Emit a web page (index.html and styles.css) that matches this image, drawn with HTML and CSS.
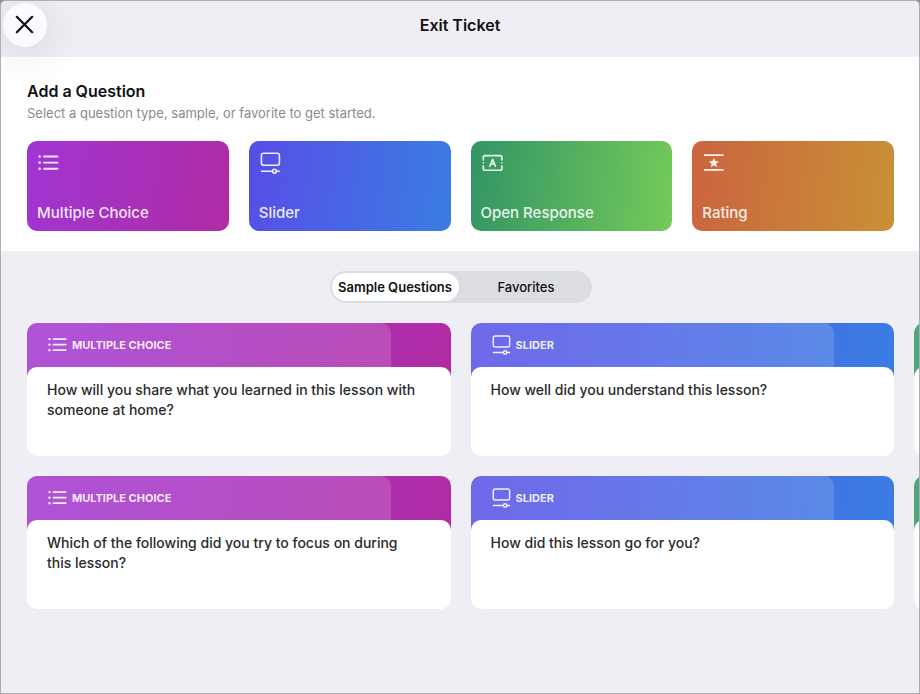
FILE: index.html
```
<!DOCTYPE html>
<html lang="en">
<head>
    <meta charset="UTF-8">
    <meta name="viewport" content="width=device-width, initial-scale=1.0">
    <title>Exit Ticket</title>
    <link rel="stylesheet" href="styles.css">
</head>
<body>
    <!-- Shared icons -->
    <svg class="icon-defs" aria-hidden="true">
        <symbol id="icon-list" viewBox="0 0 22 22">
            <g fill="none" stroke="currentColor" stroke-width="1.9" stroke-linecap="round">
                <path d="M6 4.5H19.5M6 10.6H19.5M6 16.7H19.5"/>
                <path stroke-width="2.6" d="M1.6 4.5h.01M1.6 10.6h.01M1.6 16.7h.01"/>
            </g>
        </symbol>
        <symbol id="icon-slider" viewBox="0 0 22 22">
            <g fill="none" stroke="currentColor" stroke-width="1.6" stroke-linecap="round">
                <rect x="1.4" y="1.2" width="18" height="12" rx="2.2"/>
                <path d="M1.6 19.2H12.4M16.6 19.2H19.4"/>
                <circle cx="14.5" cy="19.2" r="1.9"/>
            </g>
        </symbol>
        <symbol id="icon-text" viewBox="0 0 22 22">
            <g fill="none" stroke="currentColor" stroke-width="1.6" stroke-linecap="round" stroke-linejoin="round">
                <path d="M1.3 8V5.4Q1.3 3.6 3.1 3.6H18.1Q19.9 3.6 19.9 5.4V8M1.3 13.8V16.4Q1.3 18.2 3.1 18.2H18.1Q19.9 18.2 19.9 16.4V13.8"/>
                <path d="M1.3 10.9h.01M19.9 10.9h.01"/>
                <path d="M7.8 14.2 10.6 7.4 13.4 14.2M8.8 12H12.4"/>
            </g>
        </symbol>
        <symbol id="icon-star" viewBox="0 0 22 22">
            <path fill="none" stroke="currentColor" stroke-width="1.7" stroke-linecap="round" d="M1.6 3.2H20M1.6 17.8H20"/>
            <path fill="currentColor" d="M10.9 5.8 12.3 9.1 15.9 9.4 13.2 11.7 14 15.2 10.9 13.3 7.8 15.2 8.6 11.7 5.9 9.4 9.5 9.1Z"/>
        </symbol>
    </svg>

    <div class="sheet">
        <header class="header">
            <button class="close" type="button" aria-label="Close">
                <svg viewBox="0 0 20 20" width="20" height="20" aria-hidden="true">
                    <path d="M1.8 1.8 17.2 17.2M17.2 1.8 1.8 17.2" fill="none" stroke="currentColor" stroke-width="2.2" stroke-linecap="round"/>
                </svg>
            </button>
            <h1 class="title">Exit Ticket</h1>
        </header>

        <section class="add">
            <h2 class="add-title">Add a Question</h2>
            <p class="add-hint">Select a question type, sample, or favorite to get started.</p>
            <div class="types">
                <button class="type choice" type="button">
                    <svg class="type-icon"><use href="#icon-list"/></svg>
                    <span>Multiple Choice</span>
                </button>
                <button class="type slider" type="button">
                    <svg class="type-icon"><use href="#icon-slider"/></svg>
                    <span>Slider</span>
                </button>
                <button class="type response" type="button">
                    <svg class="type-icon"><use href="#icon-text"/></svg>
                    <span>Open Response</span>
                </button>
                <button class="type rating" type="button">
                    <svg class="type-icon"><use href="#icon-star"/></svg>
                    <span>Rating</span>
                </button>
            </div>
        </section>

        <main class="samples">
            <div class="tabs">
                <button class="tab active" type="button" aria-pressed="true">Sample Questions</button>
                <button class="tab" type="button" aria-pressed="false">Favorites</button>
            </div>

            <div class="cards">
                <button class="card" type="button">
                    <span class="card-head choice">
                        <span class="card-label"><svg class="card-icon"><use href="#icon-list"/></svg>MULTIPLE CHOICE</span>
                    </span>
                    <span class="card-body">How will you share what you learned in this lesson with someone at home?</span>
                </button>
                <button class="card" type="button">
                    <span class="card-head choice">
                        <span class="card-label"><svg class="card-icon"><use href="#icon-list"/></svg>MULTIPLE CHOICE</span>
                    </span>
                    <span class="card-body">Which of the following did you try to focus on during this lesson?</span>
                </button>
                <button class="card" type="button">
                    <span class="card-head slider">
                        <span class="card-label"><svg class="card-icon"><use href="#icon-slider"/></svg>SLIDER</span>
                    </span>
                    <span class="card-body">How well did you understand this lesson?</span>
                </button>
                <button class="card" type="button">
                    <span class="card-head slider">
                        <span class="card-label"><svg class="card-icon"><use href="#icon-slider"/></svg>SLIDER</span>
                    </span>
                    <span class="card-body">How did this lesson go for you?</span>
                </button>
                <div class="card">
                    <span class="card-head response"><span class="card-label"></span></span>
                    <span class="card-body"></span>
                </div>
                <div class="card">
                    <span class="card-head response"><span class="card-label"></span></span>
                    <span class="card-body"></span>
                </div>
            </div>
        </main>
    </div>
</body>
</html>
```
FILE: styles.css
```
:root {
    --bg-color: #efeef5;
    --text-color: #111113;
    --muted-color: #8a8a8e;
    --frame-color: #aeaeb0;
    --gap: 20px;
    --radius: 10px;
}

* {
    box-sizing: border-box;
    margin: 0;
    padding: 0;
}

body {
    font-family: Inter, Roboto, sans-serif;
    color: var(--text-color);
    background-color: #8c8c8c;
}

button {
    font: inherit;
    color: inherit;
    border: none;
    background: none;
    text-align: left;
    cursor: pointer;
}

.icon-defs {
    display: none;
}

.sheet {
    min-height: 100vh;
    border: 1px solid var(--frame-color);
    border-radius: 5px 5px 0 0;
    background-color: var(--bg-color);
    overflow: hidden;
}

.header {
    display: grid;
    grid-template-columns: 1fr auto 1fr;
    height: 56px;
    padding: 2px;
}

.close {
    display: flex;
    align-items: center;
    justify-content: center;
    width: 44px;
    height: 44px;
    border-radius: 50%;
    background-color: #fbfaff;
    box-shadow: 0 6px 40px rgba(0, 0, 0, 0.12);
    position: relative;
    z-index: 1;
}

.title {
    font-size: 16px;
    line-height: 44px;
    font-weight: 600;
}

.add {
    padding: 24px 25px 20px;
    background-color: #fff;
}

.add-title {
    font-size: 16px;
    line-height: 20px;
    font-weight: 600;
}

.add-hint {
    margin-top: 4px;
    font-size: 13px;
    line-height: 16px;
    color: var(--muted-color);
}

.types {
    display: grid;
    grid-template-columns: repeat(4, 1fr);
    gap: var(--gap);
    margin-top: 20px;
}

.type {
    display: flex;
    flex-direction: column;
    justify-content: space-between;
    align-items: flex-start;
    height: 90px;
    padding: 11px 10px 8px;
    border-radius: var(--radius);
    font-size: 15px;
    line-height: 20px;
    font-weight: 500;
    color: rgba(255, 255, 255, 0.9);
}

.type-icon {
    width: 22px;
    height: 22px;
    margin-left: 1px;
}

.choice {
    background: linear-gradient(97deg, #a035d2, #b02ca4);
}

.slider {
    background: linear-gradient(97deg, #574ee6, #3a7de3);
}

.response {
    background: linear-gradient(97deg, #329565, #74ca59);
}

.rating {
    background: linear-gradient(97deg, #cb643f, #c89135);
}

.add,
.samples {
    padding-left: 26px;
}

.samples {
    padding-top: 20px;
    padding-right: 25px;
    padding-bottom: 20px;
}

.tabs {
    display: grid;
    grid-template-columns: 1fr 1fr;
    column-gap: 4px;
    width: 262px;
    height: 32px;
    margin: 0 auto;
    padding: 2px;
    border-radius: 16px;
    background-color: #dcdde2;
}

.tab {
    border-radius: 14px;
    text-align: center;
    font-size: 13px;
    font-weight: 500;
    white-space: nowrap;
}

.tab.active {
    background-color: #fff;
    font-weight: 600;
}

/* Two cards fit, the next column peeks in from the right */
.cards {
    display: grid;
    grid-template-rows: auto auto;
    grid-auto-flow: column;
    grid-auto-columns: calc(50% - 10px);
    gap: var(--gap);
    margin-top: 20px;
}

.card {
    display: flex;
    flex-direction: column;
}

.card-head {
    display: block;
    height: 54px;
    padding-right: 60px;
    border-radius: var(--radius) var(--radius) 0 0;
    overflow: hidden;
}

.card-label {
    display: flex;
    align-items: center;
    gap: 4px;
    height: 54px;
    padding: 0 20px 10px 21px;
    border-radius: 0 var(--radius) 0 0;
    background-color: rgba(255, 255, 255, 0.15);
    font-size: 11px;
    font-weight: 700;
    color: rgba(255, 255, 255, 0.9);
}

.card-icon {
    width: 20px;
    height: 20px;
}

.card-body {
    display: block;
    min-height: 89px;
    margin-top: -10px;
    padding: 13px 28px 13px 20px;
    border-radius: var(--radius);
    background-color: #fff;
    font-size: 14px;
    line-height: 20px;
    font-weight: 500;
    color: #2a2a2c;
}
```
